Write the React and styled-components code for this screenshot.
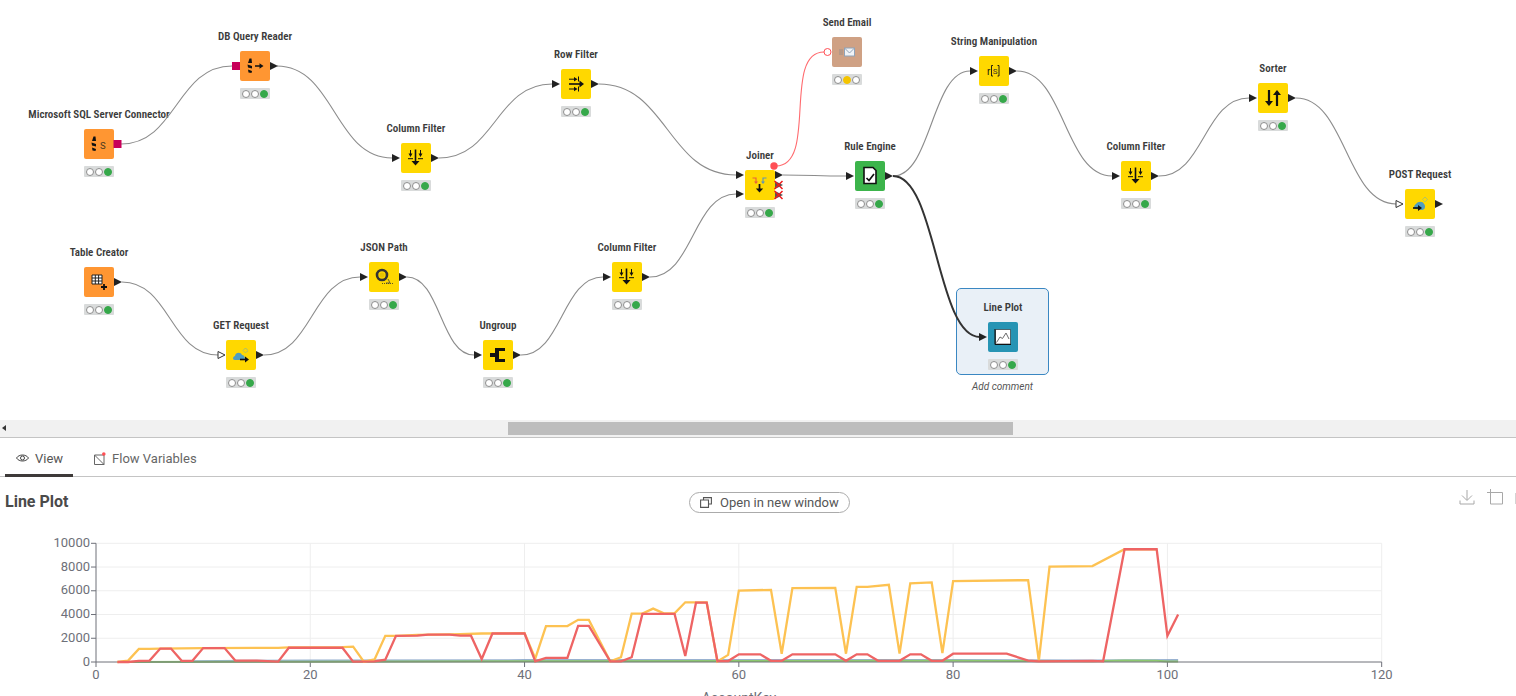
import styled, { createGlobalStyle } from "styled-components";

const GlobalStyle = createGlobalStyle`
  html, body {
    margin: 0;
    padding: 0;
    background: #fff;
    overflow: hidden;
  }
  * {
    box-sizing: border-box;
  }
`;

const Page = styled.div`
  width: 1516px;
  height: 696px;
  overflow: hidden;
  display: flex;
  flex-direction: column;
  font-family: Roboto, "Liberation Sans", sans-serif;
`;
const Canvas = styled.div`
  position: relative;
  flex: none;
  height: 420px;
`;
const WireLayer = styled.svg`
  position: absolute;
  inset: 0;
  z-index: 2;
  pointer-events: none;
`;
const Node = styled.div`
  position: absolute;
  left: ${(p) => p.$x}px;
  top: ${(p) => p.$y - 21}px;
  width: 30px;
  display: flex;
  flex-direction: column;
  align-items: center;
`;
const Label = styled.div`
  height: 14px;
  margin-bottom: 7px;
  font-size: 11px;
  line-height: 14px;
  font-weight: 600;
  font-stretch: 75%;
  letter-spacing: 0;
  white-space: nowrap;
  color: #3b3b3b;
`;
const Body = styled.div`
  width: 30px;
  height: 30px;
  flex: none;
  border-radius: 2px;
  background: ${(p) => p.$color};
`;
const Status = styled.div`
  width: 30px;
  height: 11px;
  margin-top: 7px;
  padding: 0 2px;
  display: flex;
  align-items: center;
  justify-content: space-between;
  border-radius: 1px;
  background: #d9dbdb;
`;
const Lamp = styled.span`
  width: 8px;
  height: 8px;
  border-radius: 50%;
  background: ${(p) => p.$color || "#fff"};
  border: 1px solid ${(p) => (p.$color ? p.$color : "#8e8e8e")};
`;
const Selection = styled.div`
  position: absolute;
  left: 956px;
  top: 288px;
  width: 93px;
  height: 87px;
  border: 1px solid #3a87c2;
  border-radius: 5px;
  background: #e9f0f7;
`;
const Comment = styled.div`
  position: absolute;
  left: 956px;
  top: 380px;
  width: 93px;
  text-align: center;
  font-size: 10px;
  line-height: 13px;
  font-style: italic;
  color: #555;
`;
const Scrollbar = styled.div`
  flex: none;
  height: 18px;
  display: flex;
  align-items: center;
  padding: 0 0 1px 2px;
  background: #f1f1f1;
  border-bottom: 1px solid #c4c4c4;
`;
const ScrollArrow = styled.span`
  width: 0;
  height: 0;
  border-top: 3.5px solid transparent;
  border-bottom: 3.5px solid transparent;
  border-right: 4px solid #333;
`;
const ScrollThumb = styled.div`
  width: 505px;
  height: 13px;
  margin-left: 502px;
  background: #bdbdbd;
`;
const Tabs = styled.div`
  flex: none;
  height: 39px;
  padding-left: 5px;
  display: flex;
  gap: 10px;
  border-bottom: 1px solid #c4c4c4;
`;
const Tab = styled.div`
  height: 39px;
  padding: 4px 10px 0 11px;
  display: flex;
  align-items: center;
  gap: 6px;
  font-size: 13px;
  color: ${(p) => (p.$active ? "#555" : "#666")};
  border-bottom: 3px solid ${(p) => (p.$active ? "#3e3a39" : "transparent")};
`;
const TitleRow = styled.div`
  flex: none;
  height: 49px;
  padding: 0 0 0 5px;
  display: grid;
  grid-template-columns: 684px 161px 1fr;
  align-items: start;
`;
const Title = styled.h2`
  margin: 15px 0 0;
  font-size: 16px;
  line-height: 19px;
  font-weight: 700;
  color: #4a4a4a;
`;
const OpenButton = styled.button`
  margin-top: 15px;
  height: 21px;
  padding: 0 0 0 10px;
  display: flex;
  align-items: center;
  gap: 8px;
  border: 1px solid #ababab;
  border-radius: 11px;
  background: #fff;
  font: 13px Roboto, sans-serif;
  color: #555;
`;
const Toolbox = styled.div`
  margin: 12px -15px 0 0;
  display: flex;
  justify-content: flex-end;
  gap: 12px;
`;
const Chart = styled.svg`
  flex: none;
  display: block;
  font-family: Roboto, "Liberation Sans", sans-serif;
`;

const ORANGE = "#ff9632";
const YELLOW = "#ffd800";
const GREEN = "#3cb44b";
const TEAL = "#2694b4";
const TAN = "#cfa184";

const Stack = () => (
  <path
    fill="#111"
    d="M8 12 L9.5 7.5 L11.5 7.5 L12 12 Z M7.5 13.5 L12 15 L12 17.5 L8 16.5 Z M8 18.5 L12 20 L11.5 22 L8.5 21.5 Z"
  />
);

const ICONS = {
  sql: (
    <>
      <Stack />
      <text x="16" y="19.5" fontSize="9.5" fill="#4a3a20" fontFamily="Roboto, sans-serif">S</text>
    </>
  ),
  db: (
    <>
      <Stack />
      <path d="M15 15 H21" stroke="#111" strokeWidth="1.5" />
      <path d="M19.5 12.3 L23.5 15 L19.5 17.7 Z" fill="#111" />
    </>
  ),
  columnFilter: (
    <g stroke="#111" fill="none" strokeWidth="1">
      <path d="M14.5 6.5 V19" strokeWidth="1.6" />
      <path d="M10.5 18 H18.5 L14.5 22.5 Z" fill="#111" strokeWidth="0" />
      <path d="M9.5 7 V11 M19.5 7 V11" />
      <path d="M7.5 10.5 H11.5 L9.5 14 Z M17.5 10.5 H21.5 L19.5 14 Z" fill="#111" strokeWidth="0" />
      <path d="M7 15.7 H12 M17 15.7 H22" />
    </g>
  ),
  rowFilter: (
    <g stroke="#111" fill="none" strokeWidth="1">
      <path d="M8 15 H20" strokeWidth="1.6" />
      <path d="M18.5 11.5 L23 15 L18.5 18.5 Z" fill="#111" strokeWidth="0" />
      <path d="M8 10.2 H14 M8 20 H14" />
      <path d="M13 8 L16.5 10.2 L13 12.4 Z M13 17.8 L16.5 20 L13 22.2 Z" fill="#111" strokeWidth="0" />
      <path d="M17.5 7.5 V12.5 M17.5 17.5 V22.5" />
    </g>
  ),
  joiner: (
    <>
      <path d="M7.5 8 H11 V12" stroke="#e8603c" strokeWidth="1.1" fill="none" />
      <path d="M9 11.5 H13 L11 14 Z" fill="#e8603c" />
      <path d="M21.5 8 H18 V12" stroke="#5f95b5" strokeWidth="1.1" fill="none" />
      <path d="M16 11.5 H20 L18 14 Z" fill="#5f95b5" />
      <path d="M14.5 14 V20" stroke="#111" strokeWidth="1.7" />
      <path d="M10.8 18.5 H18.2 L14.5 22.5 Z" fill="#111" />
    </>
  ),
  email: (
    <>
      <rect x="12.5" y="11" width="10" height="8" fill="#f0f3f6" stroke="#8fa3b8" />
      <path d="M12.5 11 L17.5 16 L22.5 11" fill="none" stroke="#8fa3b8" />
      <path d="M7 13 H11 M7 15 H11 M7 17 H11" stroke="#8d8d8d" strokeWidth="0.8" />
    </>
  ),
  rule: (
    <>
      <path d="M9 6.5 H18 L21 9.5 V22.5 H9 Z" fill="#fff" stroke="#111" strokeWidth="1.6" />
      <path d="M11.5 17 L14 19.5 L19 13" fill="none" stroke="#111" strokeWidth="1.7" />
    </>
  ),
  string: (
    <>
      <text x="8" y="19" fontSize="10" fill="#111" fontFamily="'Liberation Sans', sans-serif">r</text>
      <path d="M14 9.5 H12.5 V20 H14 M18.5 9.5 H20 V20 H18.5" stroke="#111" strokeWidth="0.9" fill="none" />
      <text x="13.8" y="18.2" fontSize="8" fill="#333" fontFamily="Roboto, sans-serif">S</text>
    </>
  ),
  sorter: (
    <>
      <path d="M11 7 V20" stroke="#111" strokeWidth="2.2" />
      <path d="M7 18 H15 L11 23 Z" fill="#111" />
      <path d="M19 10 V23" stroke="#111" strokeWidth="2.2" />
      <path d="M15 12 H23 L19 7 Z" fill="#111" />
    </>
  ),
  get: (
    <>
      <path d="M19.5 8 L22 10.5 L19.5 13 L17 10.5 Z" fill="none" stroke="#6fa9bd" strokeWidth="0.9" strokeDasharray="1 0.6" />
      <path d="M9 20 C6 20 7 16 9 16 C9.5 12 15 12 16 15 C19 15 20 20 17 20 Z" fill="#4f9dbf" />
      <path d="M14 19.5 H21" stroke="#111" strokeWidth="1.6" />
      <path d="M19 16.5 L23 19.5 L19 22.5 Z" fill="#111" />
    </>
  ),
  post: (
    <>
      <path d="M20 8 L22.5 10.5 L20 13 L17.5 10.5 Z" fill="none" stroke="#7fb4a5" strokeWidth="0.9" strokeDasharray="1 0.6" />
      <path d="M11 20 C8 20 9 16 11 15 C13 12 18 12 19 15 C21 17 20 21 17 21 Z" fill="#4f9dbf" />
      <path d="M8 19 H15" stroke="#111" strokeWidth="1.6" />
      <path d="M13 16 L17 19 L13 22 Z" fill="#111" />
    </>
  ),
  table: (
    <>
      <path d="M8 8 H18 V17 H8 Z M8 11 H18 M8 14 H18 M11.3 8 V17 M14.6 8 V17" fill="#fff" stroke="#222" strokeWidth="1" />
      <path d="M17 20 H23 M20 17 V23" stroke="#111" strokeWidth="1.8" />
    </>
  ),
  json: (
    <>
      <circle cx="13" cy="13" r="5" fill="none" stroke="#333" strokeWidth="2.6" />
      <circle cx="13" cy="13" r="2.6" fill="#e6c200" />
      <path d="M19 17 L21 21 L17 21" fill="none" stroke="#444" strokeWidth="0.8" />
      <path d="M13 21.5 H24" stroke="#333" strokeWidth="0.8" strokeDasharray="1 1" />
    </>
  ),
  ungroup: (
    <path d="M7 13 H12 V8 H22 V11 H16 V19 H22 V22 H12 V17 H7 Z" fill="#111" />
  ),
  plot: (
    <>
      <path d="M8 7.5 H22.5 V22 H7.5 V7.5" fill="#fff" stroke="#222" strokeWidth="0.6" />
      <path d="M7 22.5 V7 M7 22.5 H23" stroke="#111" strokeWidth="1.1" />
      <path d="M8.5 20.5 L12 15 L14.5 16.5 L18 11 L21 17" fill="none" stroke="#6b6b6b" strokeWidth="1" />
    </>
  ),
};

const NODES = [
  { label: "Microsoft SQL Server Connector", x: 84, y: 129, color: ORANGE, icon: "sql" },
  { label: "DB Query Reader", x: 240, y: 51, color: ORANGE, icon: "db" },
  { label: "Column Filter", x: 401, y: 143, color: YELLOW, icon: "columnFilter" },
  { label: "Row Filter", x: 561, y: 69, color: YELLOW, icon: "rowFilter" },
  { label: "Joiner", x: 745, y: 170, color: YELLOW, icon: "joiner" },
  { label: "Send Email", x: 832, y: 37, color: TAN, icon: "email", state: "warn" },
  { label: "Rule Engine", x: 855, y: 161, color: GREEN, icon: "rule" },
  { label: "String Manipulation", x: 979, y: 56, color: YELLOW, icon: "string" },
  { label: "Column Filter", x: 1121, y: 161, color: YELLOW, icon: "columnFilter" },
  { label: "Sorter", x: 1258, y: 83, color: YELLOW, icon: "sorter" },
  { label: "POST Request", x: 1405, y: 189, color: YELLOW, icon: "post" },
  { label: "Table Creator", x: 84, y: 267, color: ORANGE, icon: "table" },
  { label: "GET Request", x: 226, y: 340, color: YELLOW, icon: "get" },
  { label: "JSON Path", x: 369, y: 262, color: YELLOW, icon: "json" },
  { label: "Ungroup", x: 483, y: 340, color: YELLOW, icon: "ungroup" },
  { label: "Column Filter", x: 612, y: 262, color: YELLOW, icon: "columnFilter" },
  { label: "Line Plot", x: 988, y: 322, color: TEAL, icon: "plot" },
];

const WIRES = [
  [121, 144, 232, 66],
  [277, 66, 392, 158],
  [439, 158, 552, 84],
  [599, 84, 736, 175],
  [122, 282, 218, 355],
  [264, 355, 360, 277],
  [407, 277, 474, 355],
  [521, 355, 603, 277],
  [650, 277, 736, 194],
  [783, 175, 846, 176],
  [893, 176, 970, 71],
  [1017, 71, 1112, 176],
  [1159, 176, 1249, 98],
  [1296, 98, 1396, 204],
];

// x of the left edge, y of the centre
const IN_PORTS = [
  [392, 158], [552, 84], [736, 175], [736, 194], [360, 277], [474, 355],
  [603, 277], [846, 176], [970, 71], [1112, 176], [1249, 98], [979, 337],
];
const OUT_PORTS = [
  [270, 66], [431, 158], [591, 84], [114, 282], [256, 355], [399, 277], [513, 355],
  [642, 277], [775, 175], [885, 176], [1009, 71], [1151, 176], [1288, 98], [1435, 204],
];
const OPEN_PORTS = [[218, 355], [1396, 204]];
const DB_PORTS = [[113.5, 140], [232, 62]];
const CROSSES = [[778.5, 185], [778.5, 195]];

const curve = ([x1, y1, x2, y2], pull) => {
  const c = pull ?? (x2 - x1) / 2;
  return `M${x1} ${y1} C${x1 + c} ${y1} ${x2 - c} ${y2} ${x2} ${y2}`;
};

const Wires = () => (
  <WireLayer width="1516" height="420">
    {WIRES.map((w) => (
      <path key={w.join()} d={curve(w)} fill="none" stroke="#8c8c8c" strokeWidth="1.1" />
    ))}
    <path d={curve([893, 176, 980, 337])} fill="none" stroke="#333" strokeWidth="2" />
    <path d={curve([776, 166, 824, 52], 42)} fill="none" stroke="#ff6a6e" strokeWidth="1.1" />
    {IN_PORTS.map(([x, y]) => (
      <path key={`${x}-${y}`} d={`M${x} ${y - 4} L${x + 8} ${y} L${x} ${y + 4} Z`} fill="#222" />
    ))}
    {OUT_PORTS.map(([x, y]) => (
      <path key={`${x}-${y}`} d={`M${x} ${y - 4} L${x + 8} ${y} L${x} ${y + 4} Z`} fill="#222" />
    ))}
    {OPEN_PORTS.map(([x, y]) => (
      <path key={`${x}-${y}`} d={`M${x} ${y - 3.5} L${x + 7} ${y} L${x} ${y + 3.5} Z`} fill="#fff" stroke="#333" />
    ))}
    {DB_PORTS.map(([x, y]) => (
      <rect key={x} x={x} y={y} width="8" height="8" fill="#c8005a" />
    ))}
    <circle cx="774" cy="166" r="3.7" fill="#ff4f55" />
    <circle cx="827.5" cy="52" r="3.5" fill="#fff" stroke="#ff4f55" />
    {CROSSES.map(([x, y]) => (
      <g key={y}>
        <path d={`M${x - 3.5} ${y - 4} L${x + 4.5} ${y} L${x - 3.5} ${y + 4} Z`} fill="#555" />
        <path
          d={`M${x - 4} ${y - 4} L${x + 4} ${y + 4} M${x + 4} ${y - 4} L${x - 4} ${y + 4}`}
          stroke="#f01c1c"
          strokeWidth="1.5"
        />
      </g>
    ))}
  </WireLayer>
);

const WorkflowNode = ({ node }) => (
  <Node $x={node.x} $y={node.y}>
    <Label>{node.label}</Label>
    <Body $color={node.color}>
      <svg width="30" height="30" viewBox="0 0 30 30">
        {ICONS[node.icon]}
      </svg>
    </Body>
    <Status>
      <Lamp />
      <Lamp $color={node.state === "warn" ? "#f4c400" : undefined} />
      <Lamp $color={node.state === "warn" ? undefined : "#36a84a"} />
    </Status>
  </Node>
);

// value per AccountKey, read off the plot
const YELLOW_LINE = [
  [2, 0], [3, 120], [4, 1100], [5, 1100], [6, 1130], [10, 1170], [17, 1190], [18, 1240], [23, 1260], [24, 1300],
  [25, 30], [26, 220], [27, 2200], [28, 2200], [30, 2280], [33, 2320], [34, 2340], [36, 2400], [40, 2430],
  [41, 300], [42, 3030], [44, 3030], [45, 3550], [46, 3550], [48, 50], [49, 400], [50, 4080], [51, 4080], [52, 4500],
  [53, 4100], [54, 4100], [55, 5030], [57, 5030], [58, 50], [59, 600], [60, 6020], [63, 6080], [64, 700], [65, 6230],
  [69, 6250], [70, 700], [71, 6330], [72, 6330], [74, 6500], [75, 700], [76, 6630], [78, 6700], [79, 750], [80, 6820],
  [87, 6900], [88, 100], [89, 8040], [93, 8080], [96, 9500], [99, 9500],
];
const RED_LINE = [
  [2, 0], [3, 0], [4, 100], [5, 120], [6, 1130], [7, 1130], [8, 100], [9, 100], [10, 1170], [12, 1170], [13, 120],
  [15, 120], [17, 30], [18, 1200], [23, 1200], [24, 30], [26, 60], [27, 200], [28, 2200], [30, 2220], [31, 2300],
  [33, 2300], [34, 2220], [35, 2220], [36, 250], [37, 2400], [40, 2400], [41, 50], [42, 350], [44, 350], [45, 3050],
  [46, 3050], [48, 50], [49, 50], [50, 400], [51, 4050], [54, 4050], [55, 500], [56, 5000], [57, 5000], [58, 80],
  [59, 80], [60, 650], [62, 650], [63, 100], [64, 100], [65, 650], [69, 650], [70, 100], [71, 650], [72, 650],
  [73, 100], [75, 100], [76, 650], [77, 650], [78, 100], [79, 100], [80, 700], [85, 700], [87, 120], [88, 50],
  [93, 90], [94, 60], [96, 9500], [99, 9500], [100, 2200], [101, 4000],
];
const GREEN_LINE = [[2, 0], [20, 20], [40, 60], [60, 80], [80, 100], [93, 60], [96, 120], [99, 110], [100, 40], [101, 50]];
const BLUE_LINE = [[8, 60], [20, 130], [40, 160], [60, 170], [80, 160], [93, 120], [96, 150], [101, 170]];

const CHART_TOP = 526;
const px = (v) => 96 + v * 10.714;
const py = (v) => 662 - CHART_TOP - v * 0.01187;
const toPoints = (line) => line.map(([x, y]) => `${px(x)},${py(y)}`).join(" ");

const X_TICKS = [0, 20, 40, 60, 80, 100, 120];
const Y_TICKS = [0, 2000, 4000, 6000, 8000, 10000];

const LinePlot = () => (
  <Chart width="1516" height={696 - CHART_TOP}>
    {Y_TICKS.map((t) => (
      <g key={t}>
        {t > 0 && <line x1="96" x2="1381.7" y1={py(t)} y2={py(t)} stroke="#eeeeee" />}
        <line x1="91" x2="96" y1={py(t)} y2={py(t)} stroke="#6e7079" />
        <text x="90" y={py(t) + 3.5} textAnchor="end" fontSize="13" fill="#6e7079">{t}</text>
      </g>
    ))}
    {X_TICKS.map((t) => (
      <g key={t}>
        {t > 0 && <line x1={px(t)} x2={px(t)} y1={py(10000)} y2={py(0)} stroke="#eeeeee" />}
        <line x1={px(t)} x2={px(t)} y1={py(0)} y2={py(0) + 5} stroke="#6e7079" />
        <text x={px(t)} y={py(0) + 17} textAnchor="middle" fontSize="13" fill="#6e7079">{t}</text>
      </g>
    ))}
    <polyline points={toPoints(BLUE_LINE)} fill="none" stroke="#7f9fc4" strokeWidth="2" opacity="0.8" />
    <polyline points={toPoints(GREEN_LINE)} fill="none" stroke="#8dc96f" strokeWidth="2" />
    <line x1="96" x2="1381.7" y1={py(0)} y2={py(0)} stroke="#6e7079" />
    <line x1="96" x2="96" y1={py(10000)} y2={py(0)} stroke="#6e7079" />
    <polyline points={toPoints(YELLOW_LINE)} fill="none" stroke="#fdc252" strokeWidth="2.3" />
    <polyline points={toPoints(RED_LINE)} fill="none" stroke="#ee6464" strokeWidth="2.3" />
    <text x="739" y={py(0) + 41} textAnchor="middle" fontSize="14" fill="#6e7079">AccountKey</text>
  </Chart>
);

const EyeIcon = () => (
  <svg width="13" height="10" viewBox="0 0 13 10" fill="none" stroke="#444" strokeWidth="1">
    <path d="M0.5 5 C3 1 10 1 12.5 5 C10 9 3 9 0.5 5 Z" />
    <circle cx="6.5" cy="5" r="2" />
  </svg>
);

const FlowIcon = () => (
  <svg width="12" height="13" viewBox="0 0 12 13" fill="none">
    <path d="M0.5 3 H10 V12.5 H0.5 Z M0.5 3 L10 12.5" stroke="#666" />
    <circle cx="9.8" cy="2" r="1.8" fill="#ff4f55" />
  </svg>
);

const WindowIcon = () => (
  <svg width="12" height="11" viewBox="0 0 12 11" fill="none" stroke="#555" strokeWidth="1.1">
    <path d="M3.5 3 V0.6 H11.4 V7 H8.5" />
    <path d="M0.6 3 H8.5 V10.4 H0.6 Z" />
  </svg>
);

const DownloadIcon = () => (
  <svg width="16" height="16" viewBox="0 0 16 16" fill="none" stroke="#a8a8a8" strokeWidth="1">
    <path d="M8 1 V11 M3 6.5 L8 11.5 L13 6.5 M1 11.5 V15 H15 V11.5" />
  </svg>
);

const CropIcon = () => (
  <svg width="16" height="16" viewBox="0 0 16 16" fill="none" stroke="#a8a8a8" strokeWidth="1">
    <path d="M3.5 0 V15 H15.5 V3.5 H0" />
  </svg>
);

const RestoreIcon = () => (
  <svg width="16" height="16" viewBox="0 0 16 16" fill="none" stroke="#a8a8a8" strokeWidth="1">
    <path d="M1 4 V15 H14 V4 M1 8 H6" />
  </svg>
);

export default function App() {
  return (
    <Page>
      <GlobalStyle />
      <Canvas>
        <Selection />
        <Comment>Add comment</Comment>
        {NODES.map((node) => (
          <WorkflowNode key={`${node.label}-${node.x}`} node={node} />
        ))}
        <Wires />
      </Canvas>
      <Scrollbar>
        <ScrollArrow />
        <ScrollThumb />
      </Scrollbar>
      <Tabs>
        <Tab $active>
          <EyeIcon />
          View
        </Tab>
        <Tab>
          <FlowIcon />
          Flow Variables
        </Tab>
      </Tabs>
      <TitleRow>
        <Title>Line Plot</Title>
        <OpenButton>
          <WindowIcon />
          Open in new window
        </OpenButton>
        <Toolbox>
          <DownloadIcon />
          <CropIcon />
          <RestoreIcon />
        </Toolbox>
      </TitleRow>
      <LinePlot />
    </Page>
  );
}
